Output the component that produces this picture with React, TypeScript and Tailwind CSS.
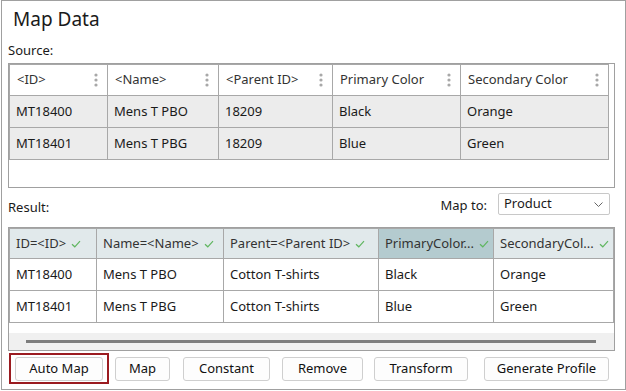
import React from "react";

const Kebab = () => (
  <svg width="4" height="14" viewBox="0 0 4 14" className="shrink-0">
    <circle cx="2" cy="2" r="1.6" fill="#a8a8a8" />
    <circle cx="2" cy="7" r="1.6" fill="#a8a8a8" />
    <circle cx="2" cy="12" r="1.6" fill="#a8a8a8" />
  </svg>
);

const Check = () => (
  <svg width="10" height="8" viewBox="0 0 10 8" className="shrink-0 ml-[5px]">
    <path d="M1 4.2 L3.8 6.8 L9 1.2" stroke="#5fb65f" strokeWidth="1.2" fill="none" />
  </svg>
);

const srcCols = [
  { w: "w-[98px]", h: "<ID>" },
  { w: "w-[111px]", h: "<Name>" },
  { w: "w-[114px]", h: "<Parent ID>" },
  { w: "w-[128px]", h: "Primary Color" },
  { w: "w-[148px]", h: "Secondary Color" },
];
const srcRows = [
  ["MT18400", "Mens T PBO", "18209", "Black", "Orange"],
  ["MT18401", "Mens T PBG", "18209", "Blue", "Green"],
];

const resCols = [
  { w: "w-[87px]", h: "ID=<ID>", hl: false },
  { w: "w-[127px]", h: "Name=<Name>", hl: false },
  { w: "w-[155px]", h: "Parent=<Parent ID>", hl: false },
  { w: "w-[115px]", h: "PrimaryColor...", hl: true },
  { w: "w-[120px]", h: "SecondaryCol...", hl: false },
];
const resRows = [
  ["MT18400", "Mens T PBO", "Cotton T-shirts", "Black", "Orange"],
  ["MT18401", "Mens T PBG", "Cotton T-shirts", "Blue", "Green"],
];

const Btn = ({ label, cls }: { label: string; cls: string }) => (
  <div
    className={`${cls} h-[24px] flex items-center justify-center border border-[#cfcfcf] rounded-[3px] bg-[#fdfdfd] text-[13px] text-[#111]`}
  >
    {label}
  </div>
);

export default function App() {
  return (
    <div className="w-[626px] h-[391px] bg-white font-['Noto_Sans','Open_Sans',sans-serif] text-[#1a1a1a]">
      <div className="ml-[1px] w-[625px] h-[390px] border border-[#a0a0a0] pl-[6px] pr-[10px] pt-[4px] flex flex-col">
        <div className="h-[28px] leading-[28px] text-[19px] pl-[5px] text-[#1a1a1a]">Map Data</div>
        <div className="mt-[9px] h-[16px] leading-[16px] text-[13px]">Source:</div>
        {/* Source box */}
        <div className="mt-[5px] h-[125px] border border-[#a0a0a0] bg-white">
          <div className="flex flex-col w-[600px] border-l border-t border-[#a8a8a8]">
            <div className="flex h-[31px]">
              {srcCols.map((c, i) => (
                <div
                  key={i}
                  className={`${c.w} border-r border-b border-[#a8a8a8] flex items-center justify-between pl-[7px] pr-[9px] text-[13px] text-[#333] bg-white`}
                >
                  <span>{c.h}</span>
                  <Kebab />
                </div>
              ))}
            </div>
            {srcRows.map((r, ri) => (
              <div key={ri} className="flex h-[32px]">
                {r.map((v, i) => (
                  <div
                    key={i}
                    className={`${srcCols[i].w} border-r border-b border-[#a8a8a8] flex items-center pl-[6px] text-[13px] text-[#1a1a1a] bg-[#ececec]`}
                  >
                    {v}
                  </div>
                ))}
              </div>
            ))}
          </div>
        </div>
        {/* Result row */}
        <div className="mt-[5px] h-[22px] flex items-start">
          <span className="mt-[3px] leading-[22px] text-[13px]">Result:</span>
          <span className="ml-auto mt-[1px] leading-[22px] text-[13px]">Map to:</span>
          <div className="ml-[11px] mr-[5px] w-[112px] h-[22px] border border-[#c8c8c8] rounded-[2px] bg-white flex items-center pl-[5px] pr-[6px] text-[13px]">
            <span>Product</span>
            <svg width="9" height="5" viewBox="0 0 9 5" className="ml-auto">
              <path d="M0.5 0.5 L4.5 4.5 L8.5 0.5" stroke="#666" strokeWidth="1" fill="none" />
            </svg>
          </div>
        </div>
        {/* Result box */}
        <div className="mt-[12px] h-[124px] border border-[#a0a0a0] bg-white flex flex-col">
          <div className="flex flex-col w-[605px] border-l border-t border-[#a8a8a8]">
            <div className="flex h-[30px]">
              {resCols.map((c, i) => (
                <div
                  key={i}
                  className={`${c.w} border-r border-b border-[#a8a8a8] flex items-center pl-[6px] text-[13px] text-[#333] whitespace-nowrap overflow-hidden ${
                    c.hl ? "bg-[#b4cbcf]" : "bg-[#e1e9eb]"
                  }`}
                >
                  <span>{c.h}</span>
                  <Check />
                </div>
              ))}
            </div>
            {resRows.map((r, ri) => (
              <div key={ri} className="flex h-[32px]">
                {r.map((v, i) => (
                  <div
                    key={i}
                    className={`${resCols[i].w} border-r border-b border-[#a8a8a8] flex items-center pl-[6px] text-[13px] text-[#1a1a1a] bg-white`}
                  >
                    {v}
                  </div>
                ))}
              </div>
            ))}
          </div>
          <div className="flex-1" />
          <div className="h-[17px] bg-[#f0f0f0] flex items-center pl-[17px] pr-[18px]">
            <div className="h-[3px] w-full bg-[#7d7d7d]" />
          </div>
        </div>
        {/* Buttons */}
        <div className="mt-[2px] h-[31px] flex items-center">
          <div className="ml-[1px] w-[100px] h-[31px] border-2 border-[#9b1b20] flex items-center justify-center">
            <Btn label="Auto Map" cls="w-[88px]" />
          </div>
          <Btn label="Map" cls="ml-[6px] w-[55px]" />
          <Btn label="Constant" cls="ml-[13px] w-[87px]" />
          <Btn label="Remove" cls="ml-[12px] w-[81px]" />
          <Btn label="Transform" cls="ml-[11px] w-[94px]" />
          <Btn label="Generate Profile" cls="ml-[16px] w-[125px]" />
        </div>
      </div>
    </div>
  );
}
